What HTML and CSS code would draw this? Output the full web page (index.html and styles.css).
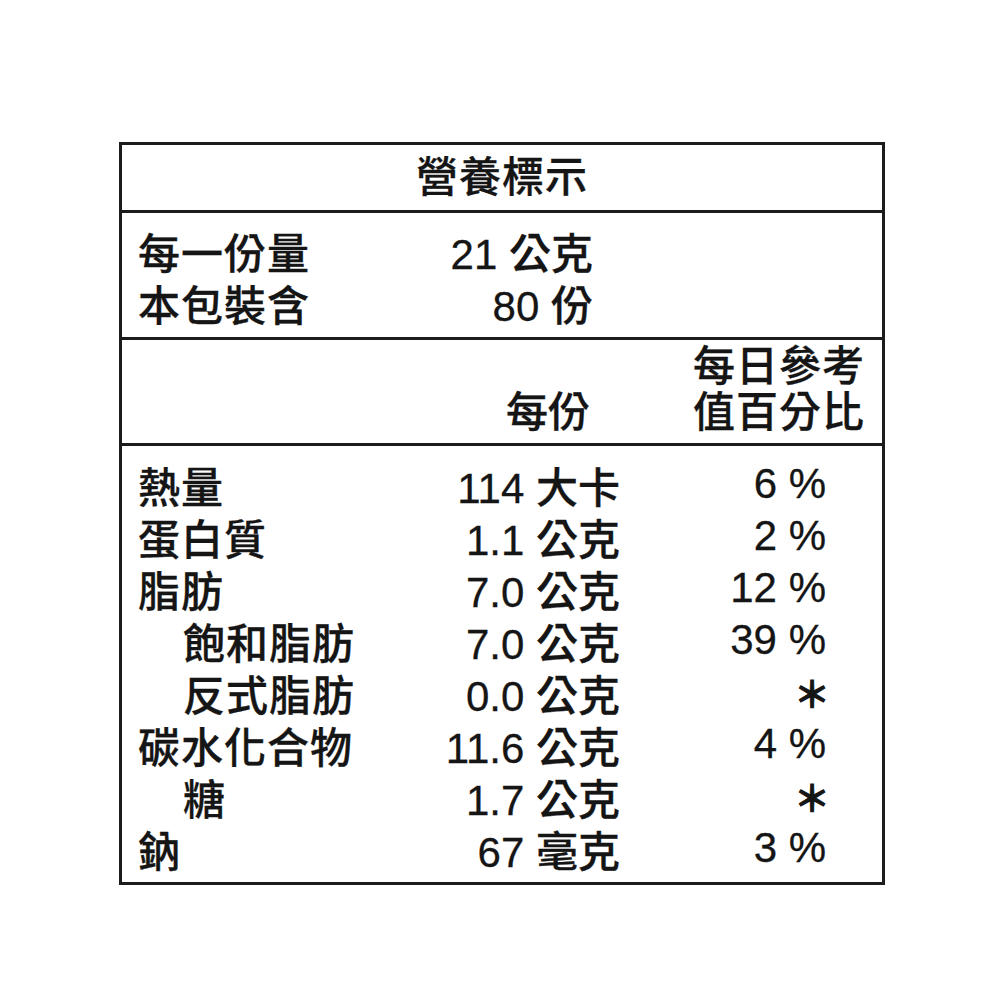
FILE: index.html
```html
<!DOCTYPE html>
<html lang="zh-Hant">
<head>
<meta charset="utf-8">
<title>營養標示</title>
<link rel="stylesheet" href="styles.css">
</head>
<body>
<div class="label">
  <div class="title">營養標示</div>
  <div class="serving">
    <div class="name">每一份量</div><div class="val">21 公克</div>
    <div class="name">本包裝含</div><div class="val">80 份</div>
  </div>
  <div class="head">
    <div class="h-blank"></div>
    <div class="h-per">每份</div>
    <div class="h-dv">每日參考<br>值百分比</div>
  </div>
  <div class="nutr">
    <div class="name">熱量</div><div class="val">114 大卡</div><div class="pct">6 %</div>
    <div class="name">蛋白質</div><div class="val">1.1 公克</div><div class="pct">2 %</div>
    <div class="name">脂肪</div><div class="val">7.0 公克</div><div class="pct">12 %</div>
    <div class="name sub">飽和脂肪</div><div class="val">7.0 公克</div><div class="pct">39 %</div>
    <div class="name sub">反式脂肪</div><div class="val">0.0 公克</div><div class="pct star">＊</div>
    <div class="name">碳水化合物</div><div class="val">11.6 公克</div><div class="pct">4 %</div>
    <div class="name sub">糖</div><div class="val">1.7 公克</div><div class="pct star">＊</div>
    <div class="name">鈉</div><div class="val">67 毫克</div><div class="pct">3 %</div>
  </div>
</div>
</body>
</html>
```
FILE: styles.css
```css
html, body {
  margin: 0;
  padding: 0;
  background: #ffffff;
}

body {
  font-family: "Liberation Sans", "Noto Sans CJK TC", sans-serif;
  color: #151515;
  font-size: 42px;
  font-weight: 500;
  -webkit-text-stroke: 0.3px #151515;
}

.label {
  box-sizing: border-box;
  width: 766px;
  margin: 142px 0 0 119px;
  border: 3px solid #1c1c1c;
}

.title {
  height: 65px;
  line-height: 65px;
  text-align: center;
  letter-spacing: 1px;
  border-bottom: 3px solid #1c1c1c;
}

.serving {
  display: grid;
  grid-template-columns: 200px 255px;
  grid-auto-rows: 52px;
  align-items: center;
  padding: 11px 0 9px 16px;
  border-bottom: 3px solid #1c1c1c;
}

.head {
  display: grid;
  grid-template-columns: 260px 192px 275px;
  align-items: end;
  padding: 4px 0 7px 16px;
  line-height: 46px;
  border-bottom: 3px solid #1c1c1c;
}

.h-per {
  text-align: right;
}

.h-dv {
  text-align: right;
  letter-spacing: 1px;
}

.nutr {
  display: grid;
  grid-template-columns: 260px 222px 206px;
  grid-auto-rows: 52px;
  align-items: center;
  padding: 12px 0 8px 16px;
}

.name {
  white-space: nowrap;
  letter-spacing: 1px;
}

.name.sub {
  padding-left: 45px;
}

.val {
  text-align: right;
  white-space: nowrap;
}

.pct {
  text-align: right;
  white-space: nowrap;
}

.pct.star {
  font-size: 36px;
  margin-right: -4px;
  font-weight: 700;
  -webkit-text-stroke: 1px #151515;
}
```
